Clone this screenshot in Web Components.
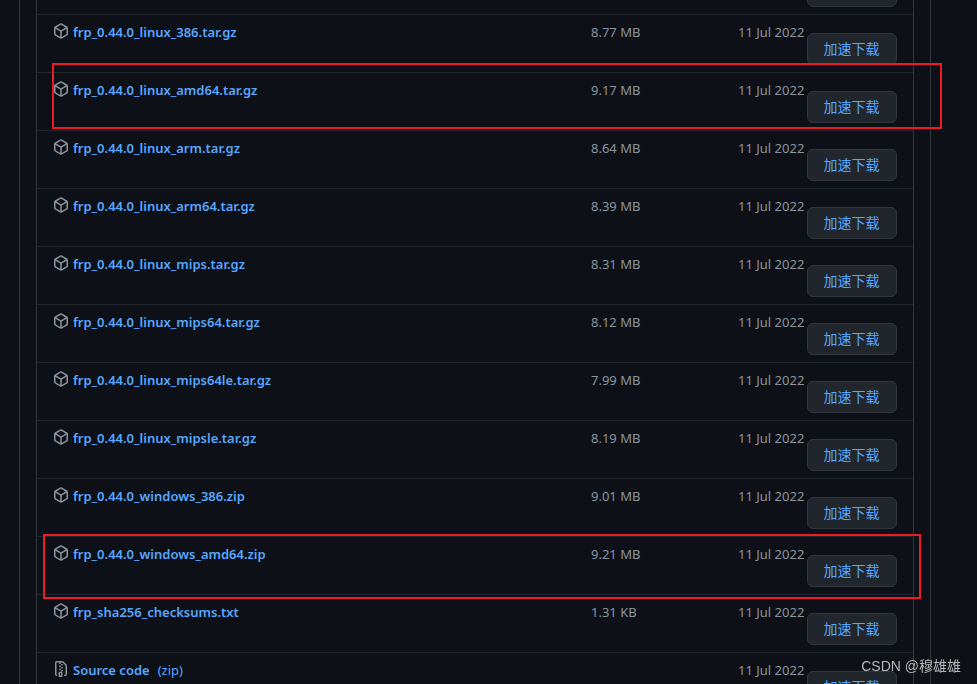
<!DOCTYPE html>
<html lang="zh-CN">
<head>
<meta charset="utf-8">
<title>frp 0.44.0 - Assets</title>
<style>
  html, body { height: 100%; }
  body {
    margin: 0;
    overflow: hidden;
    background: #0d1117;
    color: #8b949e;
    font-family: "Noto Sans", "Noto Sans CJK SC", sans-serif;
    font-size: 13px;
    line-height: 20px;
  }
</style>
</head>
<body>
<release-card>
  <asset-list>
    <asset-row></asset-row>
    <asset-row name="frp_0.44.0_linux_386.tar.gz" size="8.77 MB"></asset-row>
    <asset-row name="frp_0.44.0_linux_amd64.tar.gz" size="9.17 MB"><mark-box slot="mark" class="wide"></mark-box></asset-row>
    <asset-row name="frp_0.44.0_linux_arm.tar.gz" size="8.64 MB"></asset-row>
    <asset-row name="frp_0.44.0_linux_arm64.tar.gz" size="8.39 MB"></asset-row>
    <asset-row name="frp_0.44.0_linux_mips.tar.gz" size="8.31 MB"></asset-row>
    <asset-row name="frp_0.44.0_linux_mips64.tar.gz" size="8.12 MB"></asset-row>
    <asset-row name="frp_0.44.0_linux_mips64le.tar.gz" size="7.99 MB"></asset-row>
    <asset-row name="frp_0.44.0_linux_mipsle.tar.gz" size="8.19 MB"></asset-row>
    <asset-row name="frp_0.44.0_windows_386.zip" size="9.01 MB"></asset-row>
    <asset-row name="frp_0.44.0_windows_amd64.zip" size="9.21 MB"><mark-box slot="mark"></mark-box></asset-row>
    <asset-row name="frp_sha256_checksums.txt" size="1.31 KB"></asset-row>
    <asset-row name="Source code" note="(zip)" icon="zip"></asset-row>
  </asset-list>
</release-card>
<water-mark>CSDN @穆雄雄</water-mark>

<script>
const ICONS = {
  package: "M8.878.392a1.75 1.75 0 0 0-1.756 0l-5.25 3.045A1.75 1.75 0 0 0 1 4.951v6.098c0 .624.332 1.2.872 1.514l5.25 3.045a1.75 1.75 0 0 0 1.756 0l5.25-3.045c.54-.313.872-.89.872-1.514V4.951c0-.624-.332-1.2-.872-1.514L8.878.392ZM7.875 1.69a.25.25 0 0 1 .25 0l4.63 2.685L8 7.133 3.245 4.375l4.63-2.685ZM2.5 5.677v5.372c0 .09.047.171.125.216l4.625 2.683V8.432L2.5 5.677Zm6.25 8.271 4.625-2.683a.25.25 0 0 0 .125-.216V5.677L8.75 8.432v5.516Z",
  zip: "M3.5 1.75a.25.25 0 01.25-.25h3a.75.75 0 000 1.5h.5a.75.75 0 000-1.5h2.086a.25.25 0 01.177.073l2.914 2.914a.25.25 0 01.073.177v8.586a.25.25 0 01-.25.25h-.5a.75.75 0 000 1.5h.5A1.75 1.75 0 0014 13.25V4.664c0-.464-.184-.909-.513-1.237L10.573.513A1.75 1.75 0 009.336 0H3.75A1.75 1.75 0 002 1.75v11.5c0 .649.353 1.214.874 1.515a.75.75 0 10.752-1.298.25.25 0 01-.126-.217V1.75zM8.75 3a.75.75 0 000 1.5h.5a.75.75 0 000-1.5h-.5zM6 5.25a.75.75 0 01.75-.75h.5a.75.75 0 010 1.5h-.5A.75.75 0 016 5.25zm2 1.5A.75.75 0 018.75 6h.5a.75.75 0 010 1.5h-.5A.75.75 0 018 6.75zm-1.25.75a.75.75 0 000 1.5h.5a.75.75 0 000-1.5h-.5zM8 9.75A.75.75 0 018.75 9h.5a.75.75 0 010 1.5h-.5A.75.75 0 018 9.75zm-.75.75a1.75 1.75 0 00-1.75 1.75v3c0 .414.336.75.75.75h2.5a.75.75 0 00.75-.75v-3a1.75 1.75 0 00-1.75-1.75h-.5zm-.25 1.75a.25.25 0 01.25-.25h.5a.25.25 0 01.25.25v2.25H7v-2.25z",
};

class ReleaseCard extends HTMLElement {
  connectedCallback() {
    this.attachShadow({ mode: "open" });
    this.shadowRoot.innerHTML = `
      <style>
        :host {
          display: block;
          box-sizing: border-box;
          min-height: 100%;
          margin: 0 46px 0 19px;
          padding: 0 16px;
          border: solid #30363d;
          border-width: 0 1px;
        }
      </style>
      <slot></slot>
    `;
  }
}

class AssetList extends HTMLElement {
  connectedCallback() {
    this.attachShadow({ mode: "open" });
    this.shadowRoot.innerHTML = `
      <style>
        :host {
          display: flex;
          flex-direction: column;
          /* the list is scrolled partway into its first row */
          margin-top: -44px;
          border: solid #30363d;
          border-width: 0 1px;
        }
      </style>
      <slot></slot>
    `;
  }
}

class AssetRow extends HTMLElement {
  connectedCallback() {
    const name = this.getAttribute("name") || "";
    const note = this.getAttribute("note");
    const size = this.getAttribute("size") || "";
    const icon = ICONS[this.getAttribute("icon") || "package"];

    this.attachShadow({ mode: "open" });
    this.shadowRoot.innerHTML = `
      <style>
        :host {
          display: grid;
          grid-template-columns: 1fr 147px 69px 90px;
          align-items: start;
          position: relative;
          padding: 7px 16px;
          border-top: 1px solid #21262d;
        }

        .name {
          display: flex;
          gap: 4px;
        }

        svg {
          flex-shrink: 0;
          width: 16px;
          height: 16px;
          margin-top: 1px;
          fill: #8b949e;
        }

        a {
          display: flex;
          gap: 8px;
          color: #58a6ff;
          text-decoration: none;
          white-space: nowrap;
        }

        a:hover { text-decoration: underline; }

        b { font-weight: 600; }

        .date { white-space: nowrap; }

        button {
          height: 32px;
          margin-top: 11px;
          padding: 0 1px 2px 0;
          border: 1px solid #30363d;
          border-radius: 6px;
          background: #21262d;
          color: #58a6ff;
          font: 14px/20px "Noto Sans CJK SC", sans-serif;
          cursor: pointer;
        }
      </style>
      <div class="name">
        <svg viewBox="0 0 16 16" aria-hidden="true"><path fill-rule="evenodd" d="${icon}"/></svg>
        <a href="#"><b>${name}</b>${note ? `<span>${note}</span>` : ""}</a>
      </div>
      <span>${size}</span>
      <span class="date">${name ? "11 Jul 2022" : ""}</span>
      <button type="button">${name ? "加速下载" : ""}</button>
      <slot name="mark"></slot>
    `;
  }
}

// Red frame drawn over a row
class MarkBox extends HTMLElement {
  connectedCallback() {
    this.attachShadow({ mode: "open" });
    this.shadowRoot.innerHTML = `
      <style>
        :host {
          position: absolute;
          inset: -3px -8px -5px 6px;
          z-index: 1;
          border: 2px solid #ed1c24;
          pointer-events: none;
        }

        :host(.wide) { inset: -10px -29px 1px 15px; }
      </style>
    `;
  }
}

class WaterMark extends HTMLElement {
  connectedCallback() {
    this.attachShadow({ mode: "open" });
    this.shadowRoot.innerHTML = `
      <style>
        :host {
          position: fixed;
          right: 16px;
          bottom: 8px;
          z-index: 2;
          color: #b4b6b9;
          font: 14px/20px "Liberation Sans", "Noto Sans CJK SC", sans-serif;
        }
      </style>
      <slot></slot>
    `;
  }
}

customElements.define("release-card", ReleaseCard);
customElements.define("asset-list", AssetList);
customElements.define("asset-row", AssetRow);
customElements.define("mark-box", MarkBox);
customElements.define("water-mark", WaterMark);
</script>
</body>
</html>
